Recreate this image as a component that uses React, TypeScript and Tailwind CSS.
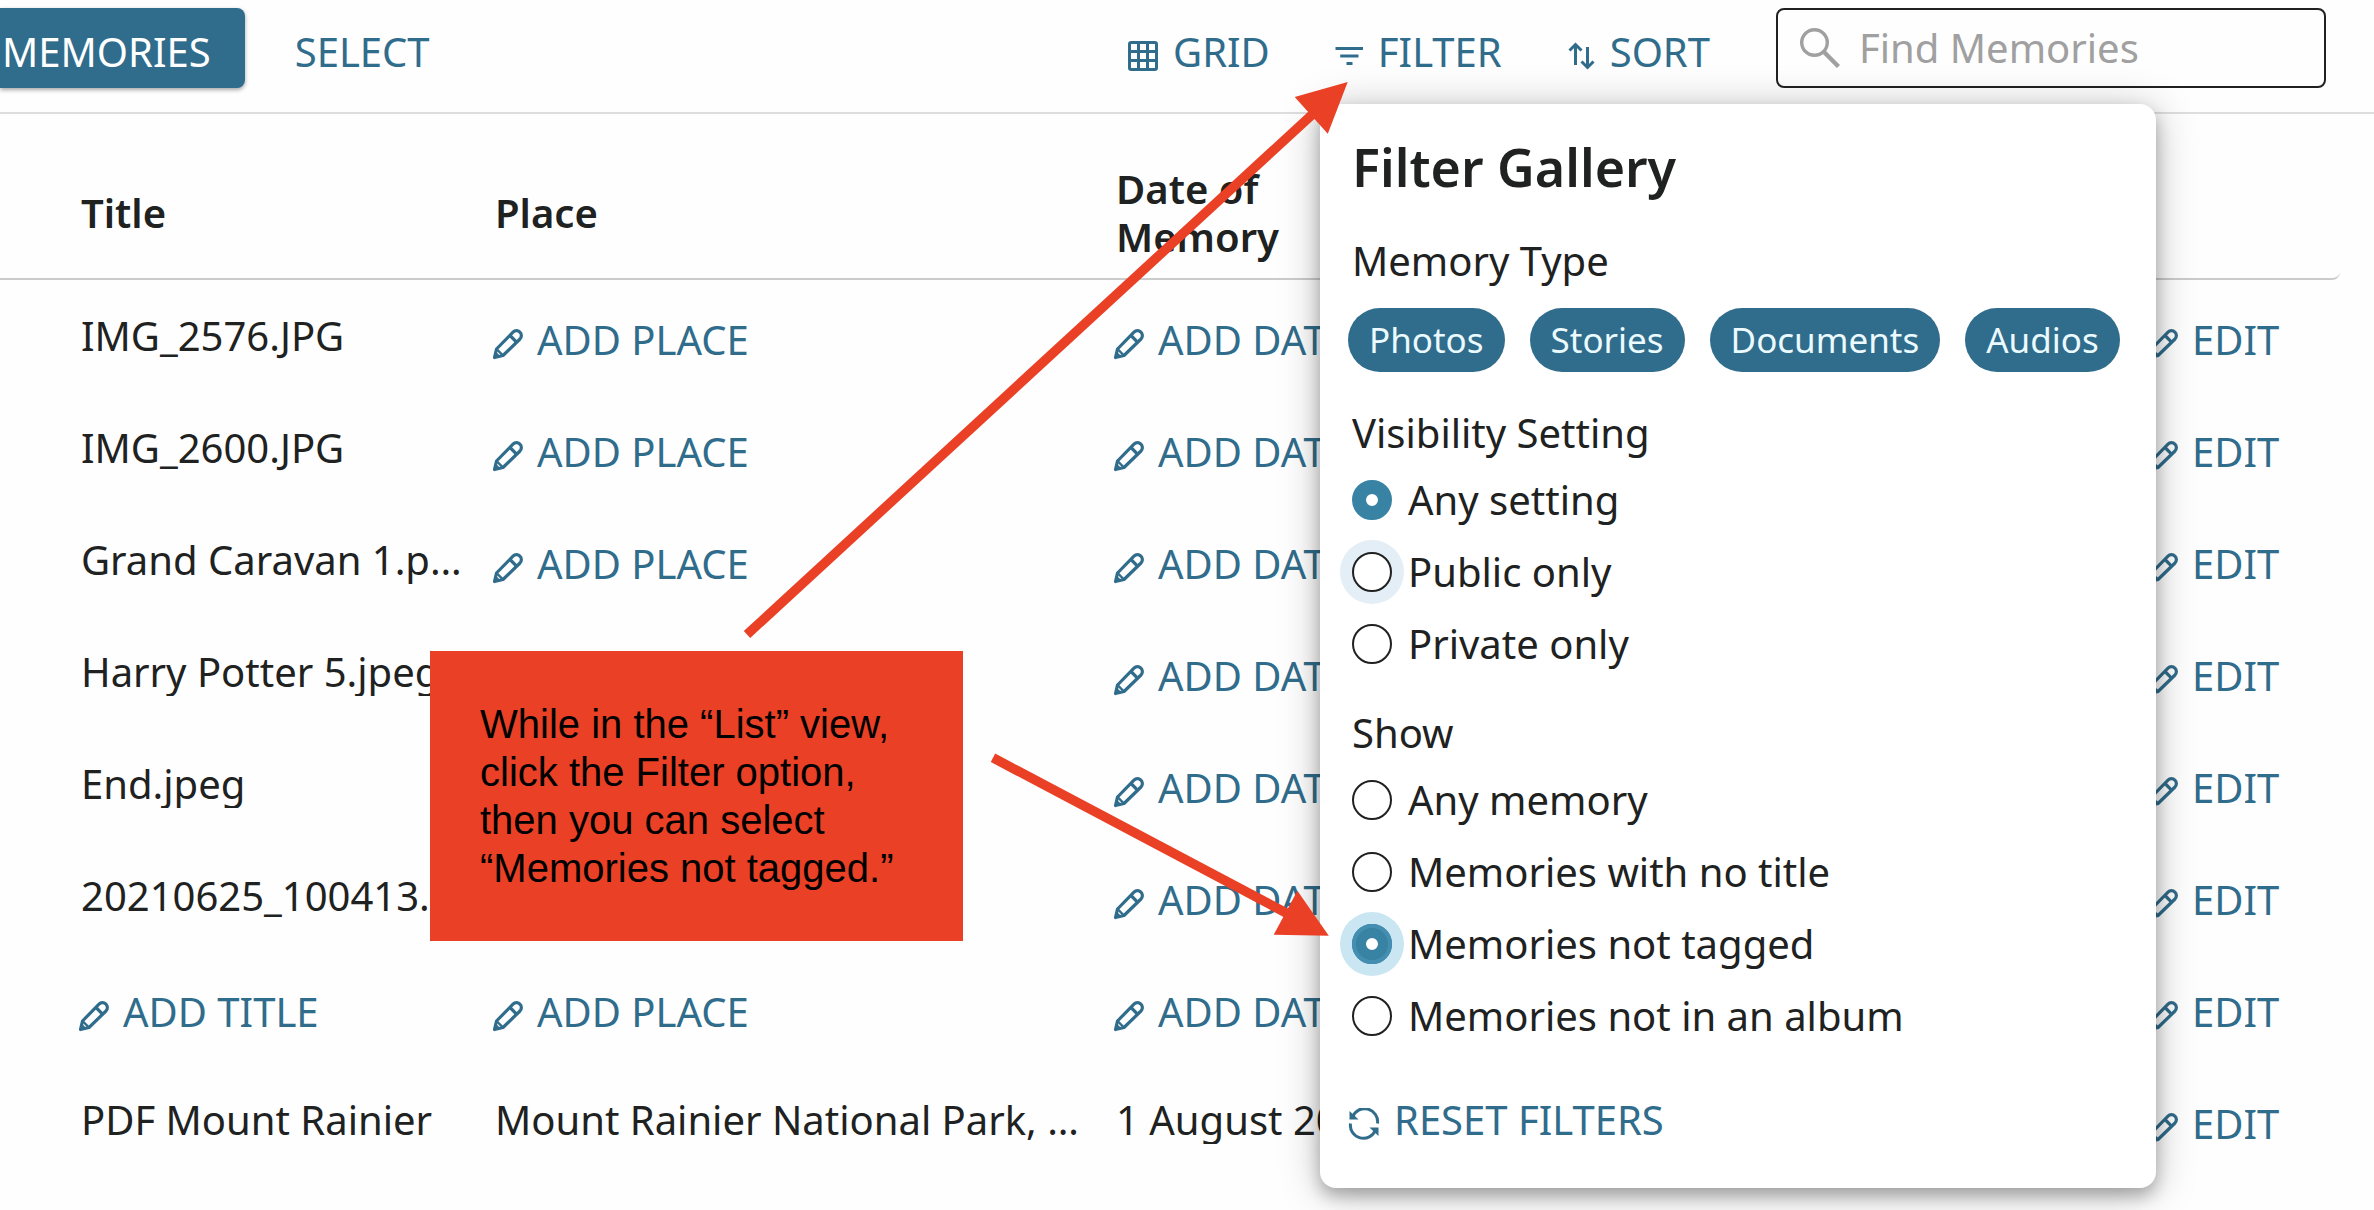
import type { ReactNode } from "react";

type Row = { title?: string; place?: string; date?: string };

const rows: Row[] = [
  { title: "IMG_2576.JPG" },
  { title: "IMG_2600.JPG" },
  { title: "Grand Caravan 1.pdf.jpeg" },
  { title: "Harry Potter 5.jpeg" },
  { title: "End.jpeg" },
  { title: "20210625_100413.jpeg" },
  {},
  { title: "PDF Mount Rainier", place: "Mount Rainier National Park, Washington", date: "1 August 2021" },
];

const memoryTypes = ["Photos", "Stories", "Documents", "Audios"];

function PencilIcon() {
  return (
    <svg className="mt-2 size-8 shrink-0" viewBox="0 0 32 32" fill="none" stroke="currentColor" strokeWidth="3.2" strokeLinejoin="round" aria-hidden="true">
      <path d="M3.5 29.5 L5.5 21 L22 4.2 A4.6 4.6 0 0 1 29 11 L12 27.5 Z" />
      <path d="M19 7.5 L25.8 14.3" />
      <path d="M6 21.5 L11.5 27" strokeWidth="2.4" />
      <path d="M3 30 L4.6 24 L9 28.4 Z" fill="currentColor" strokeWidth="1" />
    </svg>
  );
}

function GridIcon() {
  return (
    <svg className="mt-2 size-8 shrink-0" viewBox="0 0 32 32" fill="none" stroke="currentColor" strokeWidth="3" aria-hidden="true">
      <rect x="2.5" y="2.5" width="27" height="27" rx="1.8" />
      <path d="M11.5 2 V30 M20.5 2 V30 M2 11.5 H30 M2 20.5 H30" />
    </svg>
  );
}

function FilterIcon() {
  return (
    <svg className="mt-2 size-8 shrink-0" viewBox="0 0 32 32" fill="none" stroke="currentColor" strokeWidth="3" aria-hidden="true">
      <path d="M3.5 8.5 H31 M8.2 16 H26.5 M14.5 23.5 H20.5" />
    </svg>
  );
}

function SortIcon() {
  return (
    <svg className="mt-2 size-8 shrink-0" viewBox="0 0 32 32" fill="none" stroke="currentColor" strokeWidth="3" aria-hidden="true">
      <path d="M11.5 25 V5 M5.5 10.5 L11.5 4.5 L17.5 10.5" />
      <path d="M23.5 7 V27 M17.5 21.5 L23.5 27.5 L29.5 21.5" />
    </svg>
  );
}

function SearchIcon() {
  return (
    <svg className="size-10 shrink-0" viewBox="0 0 40 40" fill="none" stroke="currentColor" strokeWidth="3.4" aria-hidden="true">
      <circle cx="14.5" cy="14.5" r="12.8" />
      <path d="M23.5 23.5 L38.5 38.5" strokeWidth="4.4" />
    </svg>
  );
}

function ResetIcon() {
  return (
    <svg className="mt-2 size-8 shrink-0" viewBox="0 0 32 32" fill="none" stroke="currentColor" strokeWidth="3" aria-hidden="true">
      <path d="M4.5 9 A13 13 0 0 1 29.5 15.5" />
      <path d="M27.5 22 A13 13 0 0 1 2.5 15.5" />
      <path d="M1.5 3 V11.5 H10.5 Z" fill="currentColor" stroke="none" />
      <path d="M30.5 28 V19.5 H21.5 Z" fill="currentColor" stroke="none" />
    </svg>
  );
}

function ToolbarButton({ icon, children }: { icon: ReactNode; children: ReactNode }) {
  return (
    <button type="button" className="flex h-20 items-center gap-[14px] pt-2 text-[#306c8b]">
      {icon}
      {children}
    </button>
  );
}

function EditButton({ children }: { children: ReactNode }) {
  return (
    <button type="button" className="-ml-1 flex items-center gap-[14px] pt-2 whitespace-nowrap text-[#306c8b]">
      <PencilIcon />
      {children}
    </button>
  );
}

function Toolbar() {
  return (
    <header className="flex items-center border-b-2 border-[#dedede] pt-2 pr-12 pb-6">
      <button type="button" className="h-20 rounded-r-lg bg-[#306c8b] pt-2 pr-[34px] pl-[2px] text-white shadow-[0_2px_4px_rgba(0,0,0,0.35)]">
        MEMORIES
      </button>
      <button type="button" className="ml-[50px] h-20 pt-2 text-[#306c8b]">SELECT</button>
      <div className="ml-auto flex items-center gap-[62px]">
        <ToolbarButton icon={<GridIcon />}>GRID</ToolbarButton>
        <ToolbarButton icon={<FilterIcon />}>FILTER</ToolbarButton>
        <ToolbarButton icon={<SortIcon />}>SORT</ToolbarButton>
      </div>
      <label className="ml-[66px] flex h-20 w-[550px] items-center gap-[19px] rounded-lg border-2 border-[#202121] px-[22px] text-[#a0a0a0]">
        <SearchIcon />
        <input type="search" aria-label="Find Memories" placeholder="Find Memories" className="w-full min-w-0 bg-transparent text-[#202121] outline-none placeholder:text-[#a0a0a0]" />
      </label>
    </header>
  );
}

function MemoryTable() {
  return (
    <div className="pr-[34px]">
      <table className="w-full table-fixed border-separate border-spacing-0 text-left">
        <colgroup>
          <col className="w-[495px]" />
          <col className="w-[621px]" />
          <col />
          <col className="w-[190px]" />
        </colgroup>
        <thead>
          <tr className="h-[166px]">
            <th className="border-b-2 border-[#cbcbcb] pt-[34px] pl-[81px] font-semibold">Title</th>
            <th className="border-b-2 border-[#cbcbcb] pt-[34px] font-semibold">Place</th>
            <th className="border-b-2 border-[#cbcbcb] pt-[34px] font-semibold">
              <span className="block w-[200px]">Date of Memory</span>
            </th>
            <th className="rounded-br-lg border-b-2 border-[#cbcbcb]" aria-label="Actions" />
          </tr>
        </thead>
        <tbody>
          {rows.map((row, i) => (
            <tr key={i} className="h-28">
              <td className="pr-6 pl-[81px]">{row.title ? <p className="truncate">{row.title}</p> : <EditButton>ADD TITLE</EditButton>}</td>
              <td className="pr-6">{row.place ? <p className="truncate">{row.place}</p> : <EditButton>ADD PLACE</EditButton>}</td>
              <td>{row.date ? <p className="truncate">{row.date}</p> : <EditButton>ADD DATE</EditButton>}</td>
              <td><EditButton>EDIT</EditButton></td>
            </tr>
          ))}
        </tbody>
      </table>
    </div>
  );
}

const radioBase = "size-10 shrink-0 appearance-none rounded-full border-2 border-[#202121] bg-white checked:border-[14px] checked:border-[#3882a3]";
const hoverHalo = "shadow-[0_0_0_12px_#e3eef6]";
const focusHalo = "shadow-[0_0_0_12px_#cbe6f3] outline-4 -outline-offset-4 outline-[#438eb1]";

function Radio({ name, label, checked, halo }: { name: string; label: string; checked?: boolean; halo?: string }) {
  return (
    <label className="flex h-[72px] items-center gap-4">
      <input type="radio" name={name} defaultChecked={checked} className={`${radioBase} ${halo ?? ""}`} />
      {label}
    </label>
  );
}

function FilterPopover() {
  return (
    <section className="absolute top-[104px] right-[218px] w-[836px] rounded-2xl bg-white px-8 pt-[31px] pb-11 shadow-[0_8px_16px_rgba(0,0,0,0.25),0_4px_40px_rgba(0,0,0,0.25)]">
      <h2 className="text-[52px] leading-[64px] font-semibold">Filter Gallery</h2>
      <h3 className="mt-[38px]">Memory Type</h3>
      <div className="mt-[23px] -ml-1 flex gap-[25px]">
        {memoryTypes.map((type) => (
          <button key={type} type="button" className="h-16 rounded-full bg-[#306c8b] px-[21px] text-[35px] text-[#eafaff]">
            {type}
          </button>
        ))}
      </div>
      <fieldset className="mt-[37px]">
        <legend className="mb-[7px]">Visibility Setting</legend>
        <Radio name="visibility" label="Any setting" checked />
        <Radio name="visibility" label="Public only" halo={hoverHalo} />
        <Radio name="visibility" label="Private only" />
      </fieldset>
      <fieldset className="mt-[29px]">
        <legend className="mb-[7px]">Show</legend>
        <Radio name="show" label="Any memory" />
        <Radio name="show" label="Memories with no title" />
        <Radio name="show" label="Memories not tagged" checked halo={focusHalo} />
        <Radio name="show" label="Memories not in an album" />
      </fieldset>
      <button type="button" className="mt-11 -ml-1 flex items-center gap-[14px] text-[#306c8b]">
        <ResetIcon />
        RESET FILTERS
      </button>
    </section>
  );
}

function Callout() {
  return (
    <>
      <p className="absolute top-[651px] left-[430px] w-[533px] bg-[#ea4026] px-[50px] py-[49px] font-['Liberation_Sans',Arial,sans-serif] text-black">
        While in the “List” view, click the Filter option, then you can select “Memories not tagged.”
      </p>
      <svg className="pointer-events-none absolute inset-0 size-full" fill="#ea4026" stroke="#ea4026" aria-hidden="true">
        <path d="M747 634.5 L1315 112" strokeWidth="9.5" />
        <path d="M1347.7 82 L1294.7 97 L1327.8 133.7 Z" stroke="none" />
        <path d="M993 757.8 L1290 915" strokeWidth="9.5" />
        <path d="M1328.8 935.7 L1297.4 890.7 L1273.7 934.7 Z" stroke="none" />
      </svg>
    </>
  );
}

export default function App() {
  return (
    <div className="relative min-h-screen overflow-hidden bg-[#fefefe] font-['Noto_Sans',sans-serif] text-[40px] leading-[48px] text-[#202121]">
      <Toolbar />
      <MemoryTable />
      <FilterPopover />
      <Callout />
    </div>
  );
}
